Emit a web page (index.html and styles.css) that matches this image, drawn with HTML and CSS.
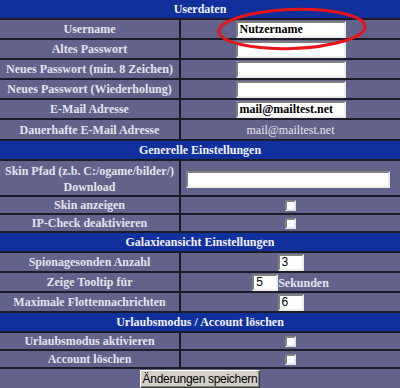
FILE: index.html
```html
<!DOCTYPE html>
<html lang="de">
<head>
<meta charset="utf-8">
<title>Einstellungen</title>
<link rel="stylesheet" href="styles.css">
</head>
<body>
<div class="frame">
<table class="opts">
  <colgroup><col class="c-label"><col class="c-value"></colgroup>
  <tr class="hdr"><th colspan="2">Userdaten</th></tr>
  <tr class="r-in"><td class="lbl">Username</td><td class="val"><input class="txt" type="text" value="Nutzername"></td></tr>
  <tr class="r-in"><td class="lbl">Altes Passwort</td><td class="val"><input class="txt" type="password"></td></tr>
  <tr class="r-in"><td class="lbl">Neues Passwort (min. 8 Zeichen)</td><td class="val"><input class="txt" type="password"></td></tr>
  <tr class="r-in"><td class="lbl">Neues Passwort (Wiederholung)</td><td class="val"><input class="txt" type="password"></td></tr>
  <tr class="r-in"><td class="lbl">E-Mail Adresse</td><td class="val"><input class="txt" type="text" value="mail@mailtest.net"></td></tr>
  <tr class="r-plain"><td class="lbl">Dauerhafte E-Mail Adresse</td><td class="val plain">mail@mailtest.net</td></tr>
  <tr class="hdr"><th colspan="2">Generelle Einstellungen</th></tr>
  <tr class="r-two"><td class="lbl">Skin Pfad (z.b. C:/ogame/bilder/)<br>Download</td><td class="val"><input class="txt wide" type="text"></td></tr>
  <tr class="r-cb"><td class="lbl">Skin anzeigen</td><td class="val"><input class="cb" type="checkbox"></td></tr>
  <tr class="r-cb"><td class="lbl">IP-Check deaktivieren</td><td class="val"><input class="cb" type="checkbox"></td></tr>
  <tr class="hdr"><th colspan="2">Galaxieansicht Einstellungen</th></tr>
  <tr class="r-in"><td class="lbl">Spionagesonden Anzahl</td><td class="val"><input class="num" type="text" value="3"></td></tr>
  <tr class="r-in"><td class="lbl">Zeige Tooltip für</td><td class="val"><input class="num" type="text" value="5"> <span class="unit">Sekunden</span></td></tr>
  <tr class="r-in"><td class="lbl">Maximale Flottennachrichten</td><td class="val"><input class="num" type="text" value="6"></td></tr>
  <tr class="hdr"><th colspan="2">Urlaubsmodus / Account löschen</th></tr>
  <tr class="r-cb"><td class="lbl">Urlaubsmodus aktivieren</td><td class="val"><input class="cb" type="checkbox"></td></tr>
  <tr class="r-cb"><td class="lbl">Account löschen</td><td class="val"><input class="cb" type="checkbox"></td></tr>
  <tr class="r-btn"><td colspan="2" class="val"><button class="save" type="button">Änderungen speichern</button></td></tr>
</table>
<svg class="mark" width="400" height="70" viewBox="0 0 400 70" aria-hidden="true">
  <ellipse cx="292" cy="29" rx="73" ry="19.5" transform="rotate(-2 292 29)" fill="none" stroke="#e8141c" stroke-width="3"/>
</svg>
</div>
</body>
</html>
```
FILE: styles.css
```css
html, body {
  margin: 0;
  padding: 0;
  background: #1c1c28;
}
.frame {
  position: relative;
  width: 400px;
  height: 388px;
  overflow: hidden;
}
.opts {
  border-collapse: separate;
  border-spacing: 2px;
  margin: -2px;
  width: 404px;
  background: #1c1c28;
  font-family: "Liberation Serif", "DejaVu Serif", serif;
  font-size: 12px;
  font-weight: bold;
  color: #e4e4ec;
  table-layout: fixed;
}
.c-label { width: 179px; }
.c-value { width: 219px; }
.opts th, .opts td {
  padding: 0 2px;
  text-align: center;
  vertical-align: middle;
  line-height: 14px;
}
.hdr th {
  background: #10309c;
  color: #f2f2ff;
  height: 18px;
  font-weight: bold;
}
.lbl, .val {
  background: #62628a;
}
.r-in td { height: 18px; }
.r-plain td { height: 19px; }
.r-two td { height: 32px; line-height: 16px; padding-top: 2px; }
.r-cb td { height: 16px; }
.r-btn td { height: 20px; }
.val { font-size: 0; }
.val.plain {
  font-size: 12px;
  font-weight: normal;
}
.unit {
  font-size: 12px;
  vertical-align: middle;
}
.txt, .num {
  box-sizing: border-box;
  height: 17px;
  margin: 0;
  padding: 0 2px;
  background: #ffffff;
  border: 2px solid;
  border-color: #808080 #ececec #ececec #808080;
  vertical-align: middle;
  color: #000;
}
.txt {
  width: 110px;
  font-family: "Liberation Serif", "DejaVu Serif", serif;
  font-weight: bold;
  font-size: 12px;
}
.txt.wide { width: 204px; margin-right: 6px; }
.num {
  width: 26px;
  font-family: "Liberation Sans", Arial, sans-serif;
  font-weight: normal;
  font-size: 12px;
}
.cb {
  -webkit-appearance: none;
  appearance: none;
  box-sizing: border-box;
  width: 11px;
  height: 11px;
  margin: 0;
  background: #ffffff;
  border: 2px solid;
  border-color: #808080 #e4e4e4 #e4e4e4 #808080;
  vertical-align: middle;
  border-radius: 0;
}
.save {
  box-sizing: border-box;
  width: 120px;
  height: 18px;
  margin: 0;
  padding: 0;
  white-space: nowrap;
  background: #d4d0c8;
  border: 1px solid;
  border-color: #ffffff #404040 #404040 #ffffff;
  box-shadow: inset -1px -1px 0 #808080;
  font-family: "Liberation Sans", Arial, sans-serif;
  font-size: 12px;
  letter-spacing: -0.3px;
  line-height: 14px;
  color: #000;
  vertical-align: middle;
}
.mark {
  position: absolute;
  left: 0;
  top: 0;
  pointer-events: none;
}
```
